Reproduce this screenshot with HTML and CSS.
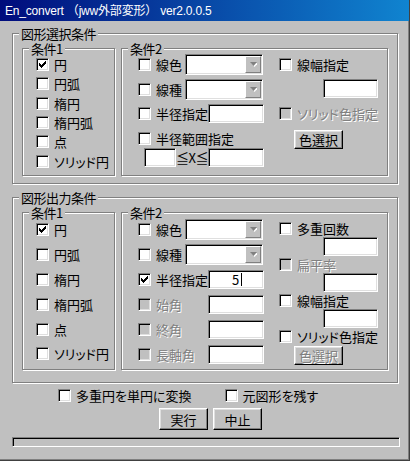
FILE: index.html
```html
<!DOCTYPE html>
<html lang="ja">
<head>
  <meta charset="UTF-8" />
  <meta name="viewport" content="width=device-width, initial-scale=1.0" />
  <title>En_convert</title>
  <link rel="stylesheet" href="styles.css">
</head>
<body>
  <div class="window">
    <div class="titlebar">En_convert （jww外部変形） ver2.0.0.5</div>

    <div class="content">
      <!-- selection -->
      <div class="group outer">
        <div class="legend">図形選択条件</div>
        <div class="group-row">
          <div class="group cond1">
            <div class="legend">条件1</div>
            <div class="opt-list">
              <label class="chk"><span class="box"><svg class="tick" viewBox="0 0 7 7" width="7" height="7"><path d="M0 2h1v3H0zM1 3h1v3H1zM2 4h1v3H2zM3 3h1v3H3zM4 2h1v3H4zM5 1h1v3H5zM6 0h1v3H6z"/></svg></span>円</label>
              <label class="chk"><span class="box"></span>円弧</label>
              <label class="chk"><span class="box"></span>楕円</label>
              <label class="chk"><span class="box"></span>楕円弧</label>
              <label class="chk"><span class="box"></span>点</label>
              <label class="chk"><span class="box"></span>ソリッド円</label>
            </div>
          </div>

          <div class="group cond2">
            <div class="legend">条件2</div>
            <div class="c2-body">
              <div class="c2-left">
                <div class="line">
                  <label class="chk"><span class="box"></span>線色</label>
                  <span class="combo"><span class="drop"><svg width="7" height="5" viewBox="0 0 7 5"><path d="M1 1h7l-3.5 4z" fill="#fff"/><path d="M0 0h7l-3.5 4z" fill="#808080"/></svg></span></span>
                </div>
                <div class="line">
                  <label class="chk"><span class="box"></span>線種</label>
                  <span class="combo"><span class="drop"><svg width="7" height="5" viewBox="0 0 7 5"><path d="M1 1h7l-3.5 4z" fill="#fff"/><path d="M0 0h7l-3.5 4z" fill="#808080"/></svg></span></span>
                </div>
                <div class="line tb-row">
                  <label class="chk"><span class="box"></span>半径指定</label>
                  <span class="tb"></span>
                </div>
                <div class="line solo">
                  <label class="chk"><span class="box"></span>半径範囲指定</label>
                </div>
                <div class="line range">
                  <span class="tb small"></span>
                  <span class="between">≦X≦</span>
                  <span class="tb"></span>
                </div>
              </div>
              <div class="sep"></div>
              <div class="c2-right">
                <div class="line">
                  <label class="chk"><span class="box"></span>線幅指定</label>
                </div>
                <span class="tb"></span>
                <div class="line">
                  <label class="chk off"><span class="box"></span>ソリッド色指定</label>
                </div>
                <button type="button" class="btn">色選択</button>
              </div>
            </div>
          </div>
        </div>
      </div>

      <!-- output -->
      <div class="group outer g-out">
        <div class="legend">図形出力条件</div>
        <div class="group-row">
          <div class="group cond1">
            <div class="legend">条件1</div>
            <div class="opt-list">
              <label class="chk"><span class="box"><svg class="tick" viewBox="0 0 7 7" width="7" height="7"><path d="M0 2h1v3H0zM1 3h1v3H1zM2 4h1v3H2zM3 3h1v3H3zM4 2h1v3H4zM5 1h1v3H5zM6 0h1v3H6z"/></svg></span>円</label>
              <label class="chk"><span class="box"></span>円弧</label>
              <label class="chk"><span class="box"></span>楕円</label>
              <label class="chk"><span class="box"></span>楕円弧</label>
              <label class="chk"><span class="box"></span>点</label>
              <label class="chk"><span class="box"></span>ソリッド円</label>
            </div>
          </div>

          <div class="group cond2">
            <div class="legend">条件2</div>
            <div class="c2-body">
              <div class="c2-left">
                <div class="line">
                  <label class="chk"><span class="box"></span>線色</label>
                  <span class="combo"><span class="drop"><svg width="7" height="5" viewBox="0 0 7 5"><path d="M1 1h7l-3.5 4z" fill="#fff"/><path d="M0 0h7l-3.5 4z" fill="#808080"/></svg></span></span>
                </div>
                <div class="line">
                  <label class="chk"><span class="box"></span>線種</label>
                  <span class="combo"><span class="drop"><svg width="7" height="5" viewBox="0 0 7 5"><path d="M1 1h7l-3.5 4z" fill="#fff"/><path d="M0 0h7l-3.5 4z" fill="#808080"/></svg></span></span>
                </div>
                <div class="line">
                  <label class="chk"><span class="box"><svg class="tick" viewBox="0 0 7 7" width="7" height="7"><path d="M0 2h1v3H0zM1 3h1v3H1zM2 4h1v3H2zM3 3h1v3H3zM4 2h1v3H4zM5 1h1v3H5zM6 0h1v3H6z"/></svg></span>半径指定</label>
                  <span class="tb value">5<span class="caret"></span></span>
                </div>
                <div class="line">
                  <label class="chk off"><span class="box"></span>始角</label>
                  <span class="tb"></span>
                </div>
                <div class="line">
                  <label class="chk off"><span class="box"></span>終角</label>
                  <span class="tb"></span>
                </div>
                <div class="line">
                  <label class="chk off"><span class="box"></span>長軸角</label>
                  <span class="tb"></span>
                </div>
              </div>
              <div class="sep"></div>
              <div class="c2-right">
                <div class="line">
                  <label class="chk"><span class="box"></span>多重回数</label>
                </div>
                <span class="tb"></span>
                <div class="line">
                  <label class="chk off"><span class="box"></span>扁平率</label>
                </div>
                <span class="tb"></span>
                <div class="line">
                  <label class="chk"><span class="box"></span>線幅指定</label>
                </div>
                <span class="tb"></span>
                <div class="line">
                  <label class="chk"><span class="box"></span>ソリッド色指定</label>
                </div>
                <button type="button" class="btn" disabled>色選択</button>
              </div>
            </div>
          </div>
        </div>
      </div>

      <div class="bottom-opts">
        <label class="chk"><span class="box"></span>多重円を単円に変換</label>
        <label class="chk"><span class="box"></span>元図形を残す</label>
      </div>

      <div class="actions">
        <button type="button" class="btn big">実行</button>
        <button type="button" class="btn big">中止</button>
      </div>

      <div class="progress"></div>
    </div>
  </div>
</body>
</html>
```

FILE: styles.css
```css
* {
  box-sizing: border-box;
}

body {
  margin: 0;
  font-family: "Noto Sans CJK JP", sans-serif;
  font-size: 13px;
  line-height: 15px;
  letter-spacing: -0.5px;
  color: #000;
  background-color: #c0c0c0;
}

.window {
  width: 410px;
  height: 461px;
  background-color: #c0c0c0;
  border-right: 1px solid #404040;
  border-bottom: 1px solid #404040;
  box-shadow: inset -1px -1px 0 #808080;
}

.titlebar {
  height: 21px;
  padding: 2px 0 0 5px;
  background: linear-gradient(to right, #000c7c, #1084d0);
  color: white;
  font-family: "Liberation Sans", "Noto Sans CJK JP", sans-serif;
  font-size: 12px;
  line-height: 19px;
  letter-spacing: -0.2px;
  white-space: nowrap;
}

.content {
  padding: 12px 0 0 12px;
}

/* etched group boxes */
.group {
  display: flex;
  flex-direction: column;
  border: 1px solid #808080;
  box-shadow: 1px 1px 0 #fff, inset 1px 1px 0 #fff;
}

.legend {
  align-self: flex-start;
  height: 14px;
  line-height: 14px;
  margin: -7px 0 -7px 6px;
  padding: 0 2px;
  background-color: #c0c0c0;
  white-space: nowrap;
}

.outer {
  width: 386px;
}

.g-out {
  margin-top: 13px;
}

.group-row {
  display: flex;
  gap: 6px;
  padding: 14px 9px 7px;
}

.g-out .group-row {
  padding-bottom: 12px;
}

.cond1 {
  width: 93px;
  height: 128px;
}

.cond2 {
  width: 267px;
  height: 128px;
}

.g-out .cond1,
.g-out .cond2 {
  height: 158px;
}

.opt-list {
  display: grid;
  grid-auto-rows: 19.3px;
  align-items: center;
  padding: 6px 0 0 13px;
}

.g-out .opt-list {
  grid-auto-rows: 24.9px;
  padding-top: 4px;
}

/* checkbox */
.chk {
  display: flex;
  align-items: center;
  gap: 5px;
  white-space: nowrap;
  font-feature-settings: "palt";
  letter-spacing: 0;
}

.box {
  flex: none;
  width: 13px;
  height: 13px;
  background-color: #fff;
  border: 1px solid;
  border-color: #808080 #fff #fff #808080;
  box-shadow: inset 1px 1px 0 #000, inset -1px -1px 0 #dfdfdf;
}

.tick {
  display: block;
  margin: 2px;
}

.chk.off {
  color: #808080;
  text-shadow: 1px 1px 0 #fff;
}

.chk.off .box {
  background-color: #c0c0c0;
}

/* condition 2 columns */
.c2-body {
  flex: 1;
  display: flex;
}

.c2-left {
  width: 144px;
  display: flex;
  flex-direction: column;
  padding: 5px 0 0 16px;
}

.sep {
  width: 1px;
  background-color: #808080;
  box-shadow: 1px 0 0 #fff;
  margin: 1px 0 4px 7px;
}

.g-out .sep {
  margin: 2px 0 5px 7px;
}

.c2-right {
  flex: 1;
  display: flex;
  flex-direction: column;
  padding: 5px 10px 0 8px;
}

.line {
  display: flex;
  align-items: center;
  justify-content: space-between;
}

.c2-left .line {
  height: 21px;
  margin-top: 4px;
}

.c2-left .line:first-child {
  margin-top: 0;
}

.c2-left .line.tb-row {
  height: 19px;
}

.c2-left .line.solo {
  height: 19px;
  margin-top: 6px;
}

.c2-left .line.range {
  height: 19px;
  margin-top: 0;
  padding-left: 6px;
}

.between {
  font-feature-settings: "palt";
  letter-spacing: -0.5px;
}

.c2-right .line {
  height: 21px;
  margin-top: 5px;
}

.c2-right .line:first-child {
  margin-top: 0;
}

.c2-right .tb {
  align-self: flex-end;
  width: 55px;
  margin-top: 4px;
}

.c2-right .btn {
  align-self: flex-start;
  margin: 6px 0 0 15px;
}

.g-out .c2-left {
  padding-top: 4px;
}

.g-out .c2-left .line {
  height: 25px;
  margin-top: 0;
}

.g-out .c2-right {
  padding-top: 7px;
}

.g-out .c2-right .line {
  height: 16px;
  margin-top: 0;
}

.g-out .c2-right .tb {
  margin-top: 1px;
}

.g-out .c2-right .btn {
  margin-top: 2px;
}

/* fields */
.tb,
.combo {
  flex: none;
  display: flex;
  background-color: #fff;
  border: 1px solid;
  border-color: #808080 #fff #fff #808080;
  box-shadow: inset 1px 1px 0 #000, inset -1px -1px 0 #dfdfdf;
}

.tb {
  width: 56px;
  height: 19px;
}

.tb.small {
  width: 32px;
}

.tb.value {
  align-items: center;
  justify-content: center;
  padding-left: 2px;
  letter-spacing: 0;
}

.caret {
  width: 1px;
  height: 13px;
  margin-left: 2px;
  background-color: #000;
}

.combo {
  width: 78px;
  height: 21px;
  margin-right: 1px;
  justify-content: flex-end;
  padding: 1px;
}

.drop {
  width: 16px;
  height: 17px;
  display: flex;
  align-items: center;
  justify-content: center;
  background-color: #c0c0c0;
  border: 1px solid;
  border-color: #fff #808080 #808080 #fff;
}

/* buttons */
.btn {
  width: 49px;
  height: 19px;
  padding: 0;
  display: flex;
  align-items: center;
  justify-content: center;
  font: inherit;
  letter-spacing: 0;
  color: #000;
  background-color: #c0c0c0;
  border: 1px solid;
  border-color: #fff #000 #000 #fff;
  box-shadow: inset -1px -1px 0 #808080, inset 1px 1px 0 #dfdfdf;
}

.btn:disabled {
  color: #808080;
  text-shadow: 1px 1px 0 #fff;
}

.btn.big {
  height: 22px;
}

.bottom-opts {
  display: flex;
  gap: 33px;
  margin-top: 5px;
  padding-left: 46px;
}

.actions {
  display: flex;
  gap: 5px;
  margin-top: 5px;
  padding-left: 147px;
}

.progress {
  width: 388px;
  height: 10px;
  margin-top: 7px;
  border: 1px solid;
  border-color: #808080 #fff #fff #808080;
  box-shadow: inset 1px 1px 0 #000;
}
```
